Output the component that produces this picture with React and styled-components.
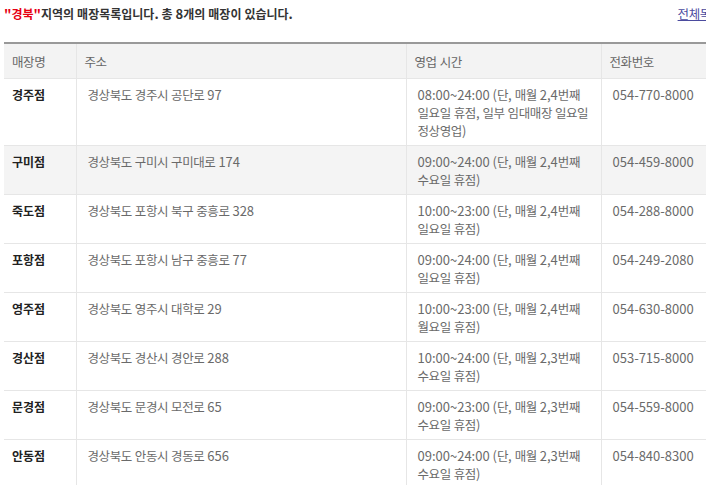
import styled, { createGlobalStyle } from "styled-components";

const GlobalStyle = createGlobalStyle`
    html, body {
        margin: 0;
        padding: 0;
        background: #fff;
        overflow: hidden;
    }
    body {
        font-family: "Noto Sans CJK KR", "Noto Sans", sans-serif;
        font-size: 13px;
        color: #666;
    }
`

const Wrap = styled.div`
    width: 720px;
    padding: 4px 0 0 4px;
`

const TitleBar = styled.div`
    display: flex;
    justify-content: space-between;
    align-items: center;
    height: 20px;
    padding-right: 2px;
    margin-bottom: 18px;
`

const Title = styled.h2`
    margin: 0;
    font-size: 13px;
    font-weight: 700;
    color: #333;
    line-height: 20px;
    white-space: nowrap;
`

const Region = styled.em`
    font-style: normal;
    color: #e60012;
`

const AllLink = styled.a`
    font-size: 13px;
    color: #4b4b9e;
    text-decoration: underline;
    line-height: 20px;
    white-space: nowrap;
`

// 한글 글자폭 맞춤
const Hangul = styled.span`
    font-size: ${p => (p.$bold ? "12px" : "12.5px")};
    letter-spacing: ${p => (p.$bold ? "0px" : "-0.4px")};
`

const Table = styled.table`
    width: 720px;
    table-layout: fixed;
    border-collapse: collapse;
    border-top: 2px solid #999;
`

const Th = styled.th`
    height: 34px;
    padding: 0 8px;
    background: #f3f3f3;
    color: #666;
    font-weight: 400;
    text-align: left;
    border-bottom: 1px solid #e6e6e6;
    border-left: ${p => (p.$first ? "none" : "1px solid #e6e6e6")};
`

const Row = styled.tr`
    background: ${p => (p.$hover ? "#f4f4f4" : "#fff")};
`

const Td = styled.td`
    padding: 7px 11px 5px ${p => (p.$first ? "8px" : "11px")};
    vertical-align: top;
    line-height: 18px;
    color: #6a6a6a;
    border-bottom: 1px solid #e6e6e6;
    border-left: ${p => (p.$first ? "none" : "1px solid #e6e6e6")};
    white-space: nowrap;
`

const Name = styled.strong`
    color: #222;
    font-weight: 700;
`

const Line = styled.div``

const stores = [
    { name: "경주점", addr: "경상북도 경주시 공단로 97", hours: ["08:00~24:00 (단, 매월 2,4번째", "일요일 휴점, 일부 임대매장 일요일", "정상영업)"], tel: "054-770-8000" },
    { name: "구미점", addr: "경상북도 구미시 구미대로 174", hours: ["09:00~24:00 (단, 매월 2,4번째", "수요일 휴점)"], tel: "054-459-8000" },
    { name: "죽도점", addr: "경상북도 포항시 북구 중흥로 328", hours: ["10:00~23:00 (단, 매월 2,4번째", "일요일 휴점)"], tel: "054-288-8000" },
    { name: "포항점", addr: "경상북도 포항시 남구 중흥로 77", hours: ["09:00~24:00 (단, 매월 2,4번째", "일요일 휴점)"], tel: "054-249-2080" },
    { name: "영주점", addr: "경상북도 영주시 대학로 29", hours: ["10:00~23:00 (단, 매월 2,4번째", "월요일 휴점)"], tel: "054-630-8000" },
    { name: "경산점", addr: "경상북도 경산시 경안로 288", hours: ["10:00~24:00 (단, 매월 2,3번째", "수요일 휴점)"], tel: "053-715-8000" },
    { name: "문경점", addr: "경상북도 문경시 모전로 65", hours: ["09:00~23:00 (단, 매월 2,3번째", "수요일 휴점)"], tel: "054-559-8000" },
    { name: "안동점", addr: "경상북도 안동시 경동로 656", hours: ["09:00~24:00 (단, 매월 2,3번째", "수요일 휴점)"], tel: "054-840-8300" },
]

function Ko({ children, bold }) {
    return String(children).split(/([가-힣]+)/).map((part, i) =>
        /[가-힣]/.test(part)
            ? <Hangul key={i} $bold={bold}>{part}</Hangul>
            : part
    )
}

export default function App() {
    return (
        <>
            <GlobalStyle />
            <Wrap>
                <TitleBar>
                    <Title>
                        <Region>"<Ko bold>경북</Ko>"</Region>
                        <Ko bold>지역의 매장목록입니다. 총 8개의 매장이 있습니다.</Ko>
                    </Title>
                    <AllLink href="#"><Ko>전체목록</Ko></AllLink>
                </TitleBar>
                <Table>
                    <colgroup>
                        <col style={{ width: 72 }} />
                        <col style={{ width: 330 }} />
                        <col style={{ width: 195 }} />
                        <col style={{ width: 123 }} />
                    </colgroup>
                    <thead>
                        <tr>
                            <Th $first><Ko>매장명</Ko></Th>
                            <Th><Ko>주소</Ko></Th>
                            <Th><Ko>영업 시간</Ko></Th>
                            <Th><Ko>전화번호</Ko></Th>
                        </tr>
                    </thead>
                    <tbody>
                        {stores.map((s, index) => (
                            <Row key={s.name} $hover={index === 1}>
                                <Td $first><Name><Ko bold>{s.name}</Ko></Name></Td>
                                <Td><Ko>{s.addr}</Ko></Td>
                                <Td>
                                    {s.hours.map((h, i) => <Line key={i}><Ko>{h}</Ko></Line>)}
                                </Td>
                                <Td>{s.tel}</Td>
                            </Row>
                        ))}
                    </tbody>
                </Table>
            </Wrap>
        </>
    )
}
